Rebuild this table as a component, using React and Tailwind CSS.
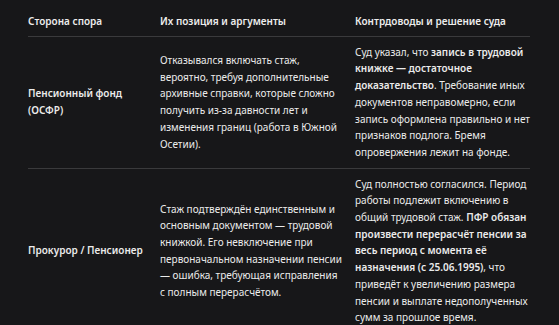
export default function App() {
  const font = { fontFamily: '"Noto Sans", "Open Sans", sans-serif' };
  return (
    <div className="w-[559px] h-[325px] overflow-hidden bg-[#171719] text-[#ebebeb] px-[28px] pt-[5px]" style={font}>
      <div className="w-[502px] text-[10px] leading-[16.7px] whitespace-nowrap">
        <div className="grid grid-cols-[132px_195px_175px] border-b border-[#3a3a3c] font-semibold text-[#ededed]">
          <div className="pt-2 pb-[6px] pr-4">Сторона спора</div>
          <div className="pt-2 pb-[6px] pr-4">Их позиция и аргументы</div>
          <div className="pt-2 pb-[6px]">Контрдоводы и решение суда</div>
        </div>
        <div className="grid grid-cols-[132px_195px_175px] items-center border-b border-[#3a3a3c]">
          <div className="py-[7px] pr-4 font-semibold">Пенсионный фонд<br />(ОСФР)</div>
          <div className="py-[7px] pr-4">
            Отказывался включать стаж,<br />
            вероятно, требуя дополнительные<br />
            архивные справки, которые сложно<br />
            получить из-за давности лет и<br />
            изменения границ (работа в Южной<br />
            Осетии).
          </div>
          <div className="py-[7px]">
            Суд указал, что <span className="font-semibold">запись в трудовой<br />книжке — достаточное<br />доказательство</span>. Требование иных<br />
            документов неправомерно, если<br />
            запись оформлена правильно и нет<br />
            признаков подлога. Бремя<br />
            опровержения лежит на фонде.
          </div>
        </div>
        <div className="grid grid-cols-[132px_195px_175px] items-center">
          <div className="py-[7px] pr-4 font-semibold">Прокурор / Пенсионер</div>
          <div className="py-[7px] pr-4">
            Стаж подтверждён единственным и<br />
            основным документом — трудовой<br />
            книжкой. Его невключение при<br />
            первоначальном назначении пенсии<br />
            — ошибка, требующая исправления<br />
            с полным перерасчётом.
          </div>
          <div className="py-[7px]">
            Суд полностью согласился. Период<br />
            работы подлежит включению в<br />
            общий трудовой стаж. <span className="font-semibold">ПФР обязан<br />произвести перерасчёт пенсии за<br />весь период с момента её<br />назначения (с 25.06.1995)</span>, что<br />
            приведёт к увеличению размера<br />
            пенсии и выплате недополученных<br />
            сумм за прошлое время.
          </div>
        </div>
      </div>
    </div>
  );
}
